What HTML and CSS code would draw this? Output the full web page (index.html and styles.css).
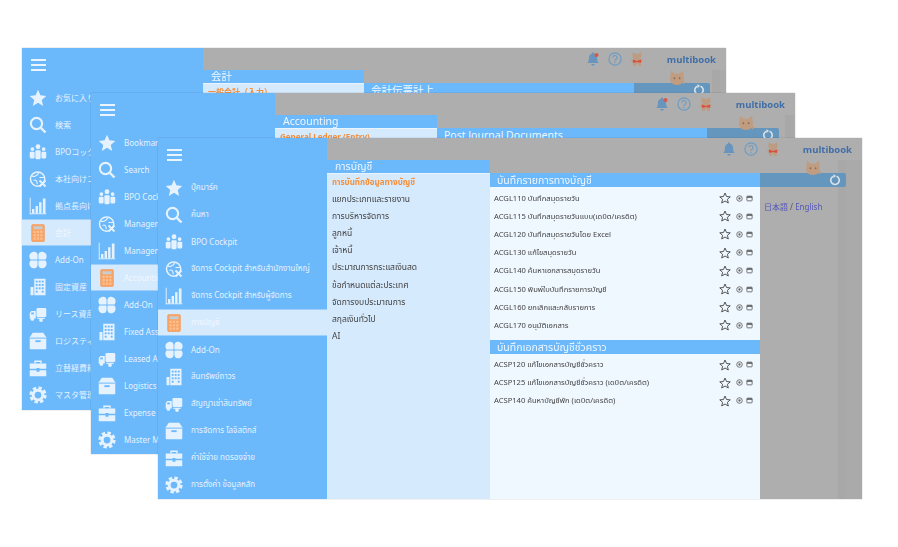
FILE: index.html
```html
<!DOCTYPE html>
<html>
<head>
	<meta charset="utf-8" />
	<title>multibook</title>
	<link rel="stylesheet" href="styles.css">
</head>
<body>
<svg class="defs" width="0" height="0">
	<symbol id="i-star" viewBox="0 0 24 24"><polygon points="12,1 15.2,8.4 23,9.2 17,14.5 18.9,22.5 12,18.2 5.1,22.5 7,14.5 1,9.2 8.800,8.400" fill="currentColor"/></symbol>
	<symbol id="i-search" viewBox="0 0 24 24"><circle cx="10" cy="10" r="7.500" fill="none" stroke="currentColor" stroke-width="2.800"/><line x1="15.500" y1="15.500" x2="22" y2="22" stroke="currentColor" stroke-width="3.200"/></symbol>
	<symbol id="i-people" viewBox="0 0 24 24"><g fill="currentColor"><circle cx="12" cy="5" r="3.200"/><circle cx="4.500" cy="8" r="2.500"/><circle cx="19.500" cy="8" r="2.500"/><rect x="8.500" y="9.500" width="7" height="12" rx="1.500"/><rect x="1" y="11.500" width="6.500" height="9" rx="1.500"/><rect x="16.500" y="11.500" width="6.500" height="9" rx="1.500"/></g></symbol>
	<symbol id="i-globe" viewBox="0 0 24 24"><g fill="none" stroke="currentColor"><circle cx="11.500" cy="12" r="9.500" stroke-width="2"/><path d="M4 8c4 2 7-1 9-4M6 14c3-2 5 1 5 5M14 10h6" stroke-width="1.500"/><path d="M14 14l8 8M22 14l-8 8" stroke-width="2.500"/></g></symbol>
	<symbol id="i-bars" viewBox="0 0 24 24"><g fill="currentColor"><rect x="1" y="1" width="1.200" height="22"/><rect x="1" y="21.800" width="22" height="1.200"/><rect x="4" y="16" width="3.200" height="6"/><rect x="8.800" y="12" width="3.200" height="10"/><rect x="13.500" y="7" width="3.200" height="15"/><rect x="18.500" y="2" width="3.500" height="20"/></g></symbol>
	<symbol id="i-calc" viewBox="0 0 24 24"><rect x="3.500" y="0.500" width="17" height="23" rx="2" fill="#f9a366" stroke="#f2a063"/><rect x="6" y="3" width="12" height="4" fill="#c9cdd0"/><g fill="#fbc190"><rect x="6" y="9" width="3" height="3"/><rect x="10.500" y="9" width="3" height="3"/><rect x="15" y="9" width="3" height="3"/><rect x="6" y="13.500" width="3" height="3"/><rect x="10.500" y="13.500" width="3" height="3"/><rect x="15" y="13.500" width="3" height="3"/><rect x="6" y="18" width="3" height="3"/><rect x="10.500" y="18" width="3" height="3"/><rect x="15" y="18" width="3" height="3"/></g></symbol>
	<symbol id="i-addon" viewBox="0 0 24 24"><g fill="currentColor"><path d="M11.300 11.300H2C0 9 0 5 2 3s6-3 8-1 1.500 5 1.300 9.300z"/><path d="M12.700 11.300H22c2-2.300 2-6.300 0-8.300s-6-3-8-1-1.500 5-1.300 9.300z"/><path d="M11.300 12.700H2c-2 2.300-2 6.300 0 8.300s6 3 8 1 1.500-5 1.300-9.300z"/><path d="M12.700 12.700H22c2 2.300 2 6.300 0 8.300s-6 3-8 1-1.500-5-1.300-9.300z"/></g></symbol>
	<symbol id="i-building" viewBox="0 0 24 24"><path fill="currentColor" d="M2 12h4v11H2zM7 1h15v22H7z"/><g fill="#6bb8fb"><rect x="9" y="3.500" width="2.500" height="2.500"/><rect x="13" y="3.500" width="2.500" height="2.500"/><rect x="17" y="3.500" width="2.500" height="2.500"/><rect x="9" y="8" width="2.500" height="2.500"/><rect x="13" y="8" width="2.500" height="2.500"/><rect x="17" y="8" width="2.500" height="2.500"/><rect x="9" y="12.500" width="2.500" height="2.500"/><rect x="13" y="12.500" width="2.500" height="2.500"/><rect x="17" y="12.500" width="2.500" height="2.500"/><rect x="9" y="17" width="2.500" height="2.500"/><rect x="17" y="17" width="2.500" height="2.500"/></g></symbol>
	<symbol id="i-truck" viewBox="0 0 24 24"><g fill="currentColor"><rect x="10" y="4" width="13" height="12" rx="1.500"/><path d="M1 10.500 3 8h6v10H1z"/><rect x="11" y="17" width="10" height="1.500"/><circle cx="4.500" cy="18.500" r="2.500"/><circle cx="16" cy="20" r="2.500"/></g><rect x="3" y="10" width="3.500" height="2.500" fill="#6bb8fb"/></symbol>
	<symbol id="i-box" viewBox="0 0 24 24"><path fill="currentColor" d="M5 1h14l4 6v15a1 1 0 0 1-1 1H2a1 1 0 0 1-1-1V7z"/><rect x="1" y="7.500" width="22" height="1.300" fill="#6bb8fb"/><rect x="8.500" y="11" width="7" height="2.500" fill="#6bb8fb"/></symbol>
	<symbol id="i-case" viewBox="0 0 24 24"><path fill="none" stroke="currentColor" stroke-width="1.800" d="M8 6V3h8v3"/><path fill="currentColor" d="M1 6h22v7H14v-1h-4v1H1zM1 15h9v2h4v-2h9v8H1z"/></symbol>
	<symbol id="i-gear" viewBox="0 0 24 24"><g fill="none" stroke="currentColor"><circle cx="12" cy="12" r="6.500" stroke-width="4"/><circle cx="12" cy="12" r="9.500" stroke-width="4" stroke-dasharray="4.500 3"/></g></symbol>
	<symbol id="i-fav" viewBox="0 0 24 24"><polygon points="12,2 15,9 22.500,9.700 16.800,14.600 18.600,22 12,18 5.400,22 7.200,14.600 1.500,9.700 9,9" fill="none" stroke="#555" stroke-width="2"/></symbol>
	<symbol id="i-dot" viewBox="0 0 24 24"><circle cx="12" cy="12" r="9.500" fill="none" stroke="#666" stroke-width="3"/><circle cx="12" cy="12" r="4" fill="#666"/></symbol>
	<symbol id="i-tab" viewBox="0 0 24 24"><rect x="3" y="4" width="18" height="16" rx="2" fill="none" stroke="#666" stroke-width="3"/><rect x="3" y="4" width="18" height="6" fill="#666"/></symbol>
	<symbol id="i-bell" viewBox="0 0 24 24"><path fill="#6795bd" d="M12 1c1.500 0 2 1 2 2 4 1 5 4 5 8 0 4 1 6 3 8H2c2-2 3-4 3-8 0-4 1-7 5-8 0-1 .500-2 2-2zM9 20.500h6a3 3 0 0 1-6 0z"/></symbol>
	<symbol id="i-bell-new" viewBox="0 0 24 24"><path fill="#6795bd" d="M12 1c1.500 0 2 1 2 2 4 1 5 4 5 8 0 4 1 6 3 8H2c2-2 3-4 3-8 0-4 1-7 5-8 0-1 .500-2 2-2zM9 20.500h6a3 3 0 0 1-6 0z"/><circle cx="18" cy="5" r="3.500" fill="#d9574a"/></symbol>
	<symbol id="i-help" viewBox="0 0 24 24"><circle cx="12" cy="12" r="10.500" fill="none" stroke="#6d9cc4" stroke-width="2"/><path d="M8.500 9.500a3.500 3.500 0 1 1 5 3.200c-1 .600-1.500 1.200-1.500 2.500" fill="none" stroke="#6d9cc4" stroke-width="2"/><circle cx="12" cy="18" r="1.200" fill="#6d9cc4"/></symbol>
	<symbol id="i-cat" viewBox="0 0 24 24"><path fill="#c09c80" d="M4 1l5 4h6l5-4 1 9c1 6-3 10-9 10S2 16 3 10z"/><path fill="#c09c80" d="M20 14l4 3-4 2z"/><circle cx="8.500" cy="11" r="1.200" fill="#8a6d5a"/><circle cx="15.500" cy="11" r="1.200" fill="#8a6d5a"/></symbol>
	<symbol id="i-mascot" viewBox="0 0 24 24"><path fill="#bd9c84" d="M5 0l4 3h6l4-3 1 7c0 3.500-3 6-8 6S4 10.500 4 7z"/><path fill="#bd9c84" d="M7 12h10l6 2-5 4 1 6h-5v-3h-4v3H5l1-6-5-4z"/><path fill="#d9503f" d="M5 13l7 2.500L19 13v6l-7-2-7 2z"/></symbol>
	<symbol id="i-reload" viewBox="0 0 24 24"><path d="M15 4.500a8.500 8.500 0 1 1-6 0" fill="none" stroke="#d9e3ea" stroke-width="3.200"/><path d="M9 0v8l5-4z" fill="#d9e3ea"/></symbol>
</svg>

<div class="stage">

	<!-- ja -->
	<div class="win win-ja">
		<nav class="side side-ja">
			<div class="burger"><i></i><i></i><i></i></div>
			<a class="nav"><svg><use href="#i-star"/></svg><span>お気に入り</span></a>
			<a class="nav"><svg><use href="#i-search"/></svg><span>検索</span></a>
			<a class="nav"><svg><use href="#i-people"/></svg><span>BPOコックピット</span></a>
			<a class="nav"><svg><use href="#i-globe"/></svg><span>本社向けコックピット</span></a>
			<a class="nav"><svg><use href="#i-bars"/></svg><span>拠点長向けコックピット</span></a>
			<a class="nav active"><svg><use href="#i-calc"/></svg><span>会計</span></a>
			<a class="nav"><svg><use href="#i-addon"/></svg><span>Add-On</span></a>
			<a class="nav"><svg><use href="#i-building"/></svg><span>固定資産</span></a>
			<a class="nav"><svg><use href="#i-truck"/></svg><span>リース資産</span></a>
			<a class="nav"><svg><use href="#i-box"/></svg><span>ロジスティクス</span></a>
			<a class="nav"><svg><use href="#i-case"/></svg><span>立替経費精算</span></a>
			<a class="nav"><svg><use href="#i-gear"/></svg><span>マスタ管理</span></a>
		</nav>
		<div class="main">
			<div class="topbar">
				<svg class="tool"><use href="#i-bell-new"/></svg>
				<svg class="tool"><use href="#i-help"/></svg>
				<svg class="tool mascot"><use href="#i-mascot"/></svg>
				<b class="logo">multibook</b>
			</div>
			<div class="panes">
				<div class="menu menu-ja">
					<h3>会計</h3>
					<ul><li class="on">一般会計（入力）</li></ul>
				</div>
				<div class="list">
					<h4 class="blue">会計伝票計上</h4>
				</div>
				<div class="aside">
					<svg class="cat"><use href="#i-cat"/></svg>
					<div class="strip"><svg><use href="#i-reload"/></svg></div>
				</div>
			</div>
		</div>
	</div>

	<!-- en -->
	<div class="win win-en">
		<nav class="side side-en">
			<div class="burger"><i></i><i></i><i></i></div>
			<a class="nav"><svg><use href="#i-star"/></svg><span>Bookmark</span></a>
			<a class="nav"><svg><use href="#i-search"/></svg><span>Search</span></a>
			<a class="nav"><svg><use href="#i-people"/></svg><span>BPO Cockpit</span></a>
			<a class="nav"><svg><use href="#i-globe"/></svg><span>Management Cockpit</span></a>
			<a class="nav"><svg><use href="#i-bars"/></svg><span>Management Cockpit</span></a>
			<a class="nav active"><svg><use href="#i-calc"/></svg><span>Accounting</span></a>
			<a class="nav"><svg><use href="#i-addon"/></svg><span>Add-On</span></a>
			<a class="nav"><svg><use href="#i-building"/></svg><span>Fixed Assets</span></a>
			<a class="nav"><svg><use href="#i-truck"/></svg><span>Leased Assets</span></a>
			<a class="nav"><svg><use href="#i-box"/></svg><span>Logistics</span></a>
			<a class="nav"><svg><use href="#i-case"/></svg><span>Expense</span></a>
			<a class="nav"><svg><use href="#i-gear"/></svg><span>Master Maintenance</span></a>
		</nav>
		<div class="main">
			<div class="topbar">
				<svg class="tool"><use href="#i-bell-new"/></svg>
				<svg class="tool"><use href="#i-help"/></svg>
				<svg class="tool mascot"><use href="#i-mascot"/></svg>
				<b class="logo">multibook</b>
			</div>
			<div class="panes">
				<div class="menu menu-en">
					<h3>Accounting</h3>
					<ul><li class="on">General Ledger (Entry)</li></ul>
				</div>
				<div class="list">
					<h4 class="blue">Post Journal Documents</h4>
				</div>
				<div class="aside">
					<svg class="cat"><use href="#i-cat"/></svg>
					<div class="strip"><svg><use href="#i-reload"/></svg></div>
				</div>
			</div>
		</div>
	</div>

	<!-- th -->
	<div class="win win-th">
		<nav class="side side-th">
			<div class="burger"><i></i><i></i><i></i></div>
			<a class="nav"><svg><use href="#i-star"/></svg><span>บุ๊คมาร์ค</span></a>
			<a class="nav"><svg><use href="#i-search"/></svg><span>ค้นหา</span></a>
			<a class="nav"><svg><use href="#i-people"/></svg><span>BPO Cockpit</span></a>
			<a class="nav"><svg><use href="#i-globe"/></svg><span>จัดการ Cockpit สำหรับสำนักงานใหญ่</span></a>
			<a class="nav"><svg><use href="#i-bars"/></svg><span>จัดการ Cockpit สำหรับผู้จัดการ</span></a>
			<a class="nav active"><svg><use href="#i-calc"/></svg><span>การบัญชี</span></a>
			<a class="nav"><svg><use href="#i-addon"/></svg><span>Add-On</span></a>
			<a class="nav"><svg><use href="#i-building"/></svg><span>สินทรัพย์ถาวร</span></a>
			<a class="nav"><svg><use href="#i-truck"/></svg><span>สัญญาเช่าสินทรัพย์</span></a>
			<a class="nav"><svg><use href="#i-box"/></svg><span>การจัดการ โลจิสติกส์</span></a>
			<a class="nav"><svg><use href="#i-case"/></svg><span>ค่าใช้จ่าย ทดรองจ่าย</span></a>
			<a class="nav"><svg><use href="#i-gear"/></svg><span>การตั้งค่า ข้อมูลหลัก</span></a>
		</nav>
		<div class="main">
			<div class="topbar">
				<svg class="tool"><use href="#i-bell"/></svg>
				<svg class="tool"><use href="#i-help"/></svg>
				<svg class="tool mascot"><use href="#i-mascot"/></svg>
				<b class="logo">multibook</b>
			</div>
			<div class="panes">
				<div class="menu menu-th">
					<h3>การบัญชี</h3>
					<ul>
						<li class="on">การบันทึกข้อมูลทางบัญชี</li>
						<li>แยกประเภทและรายงาน</li>
						<li>การบริหารจัดการ</li>
						<li>ลูกหนี้</li>
						<li>เจ้าหนี้</li>
						<li>ประมาณการกระแสเงินสด</li>
						<li>ข้อกำหนดแต่ละประเทศ</li>
						<li>จัดการงบประมาณการ</li>
						<li>สกุลเงินทั่วไป</li>
						<li>AI</li>
					</ul>
				</div>
				<div class="list">
					<h4 class="blue">บันทึกรายการทางบัญชี</h4>
					<div class="rows">
						<div class="row"><span>ACGL110 บันทึกสมุดรายวัน</span><svg class="fav"><use href="#i-fav"/></svg><svg class="mini"><use href="#i-dot"/></svg><svg class="mini"><use href="#i-tab"/></svg></div>
						<div class="row"><span>ACGL115 บันทึกสมุดรายวันแบบ(เดบิต/เครดิต)</span><svg class="fav"><use href="#i-fav"/></svg><svg class="mini"><use href="#i-dot"/></svg><svg class="mini"><use href="#i-tab"/></svg></div>
						<div class="row"><span>ACGL120 บันทึกสมุดรายวันโดย Excel</span><svg class="fav"><use href="#i-fav"/></svg><svg class="mini"><use href="#i-dot"/></svg><svg class="mini"><use href="#i-tab"/></svg></div>
						<div class="row"><span>ACGL130 แก้ไขสมุดรายวัน</span><svg class="fav"><use href="#i-fav"/></svg><svg class="mini"><use href="#i-dot"/></svg><svg class="mini"><use href="#i-tab"/></svg></div>
						<div class="row"><span>ACGL140 ค้นหาเอกสารสมุดรายวัน</span><svg class="fav"><use href="#i-fav"/></svg><svg class="mini"><use href="#i-dot"/></svg><svg class="mini"><use href="#i-tab"/></svg></div>
						<div class="row"><span>ACGL150 พิมพ์ใบบันทึกรายการบัญชี</span><svg class="fav"><use href="#i-fav"/></svg><svg class="mini"><use href="#i-dot"/></svg><svg class="mini"><use href="#i-tab"/></svg></div>
						<div class="row"><span>ACGL160 ยกเลิกและกลับรายการ</span><svg class="fav"><use href="#i-fav"/></svg><svg class="mini"><use href="#i-dot"/></svg><svg class="mini"><use href="#i-tab"/></svg></div>
						<div class="row"><span>ACGL170 อนุมัติเอกสาร</span><svg class="fav"><use href="#i-fav"/></svg><svg class="mini"><use href="#i-dot"/></svg><svg class="mini"><use href="#i-tab"/></svg></div>
					</div>
					<h4 class="blue second">บันทึกเอกสารบัญชีชั่วคราว</h4>
					<div class="rows">
						<div class="row"><span>ACSP120 แก้ไขเอกสารบัญชีชั่วคราว</span><svg class="fav"><use href="#i-fav"/></svg><svg class="mini"><use href="#i-dot"/></svg><svg class="mini"><use href="#i-tab"/></svg></div>
						<div class="row"><span>ACSP125 แก้ไขเอกสารบัญชีชั่วคราว (เดบิต/เครดิต)</span><svg class="fav"><use href="#i-fav"/></svg><svg class="mini"><use href="#i-dot"/></svg><svg class="mini"><use href="#i-tab"/></svg></div>
						<div class="row"><span>ACSP140 ค้นหาบัญชีพัก (เดบิต/เครดิต)</span><svg class="fav"><use href="#i-fav"/></svg><svg class="mini"><use href="#i-dot"/></svg><svg class="mini"><use href="#i-tab"/></svg></div>
					</div>
				</div>
				<div class="aside">
					<svg class="cat"><use href="#i-cat"/></svg>
					<div class="strip"><svg><use href="#i-reload"/></svg></div>
					<div class="lang"><a>日本語</a> / <a>English</a></div>
				</div>
			</div>
		</div>
	</div>

</div>
</body>
</html>
```

FILE: styles.css
```css
html, body {
	margin: 0;
	padding: 0;
	background: #fff;
}
.defs {
	position: absolute;
}
.stage {
	position: relative;
	width: 898px;
	height: 547px;
	overflow: hidden;
	filter: blur(.6px);
	font-family: "Noto Sans", "Noto Sans Thai", "Liberation Sans", "Noto Sans CJK JP", sans-serif;
}

/* windows */
.win {
	position: absolute;
	display: flex;
	width: 704px;
	height: 361px;
	background: #aeaeae;
	box-shadow: 0 0 1px rgba(60, 80, 100, .5);
}
.win-ja { left: 22px; top: 48px; height: 362px; }
.win-en { left: 91px; top: 93px; }
.win-th { left: 158px; top: 138px; }

/* sidebar */
.side {
	flex: none;
	background: #6bb8fb;
	color: #fff;
	overflow: hidden;
}
.side-ja { width: 181px; }
.side-en { width: 184px; }
.side-th { width: 169px; }
.burger {
	height: 36px;
	padding: 11px 0 0 9px;
	box-sizing: border-box;
}
.burger i {
	display: block;
	width: 15px;
	height: 2px;
	margin-bottom: 3px;
	background: #eaf5ff;
}
.nav {
	display: flex;
	align-items: center;
	height: 27px;
	padding-left: 7px;
	box-sizing: border-box;
	font-size: 8px;
	color: #e6f3ff;
	white-space: nowrap;
}
.nav svg {
	flex: none;
	width: 18px;
	height: 18px;
	margin-right: 8px;
}
.nav.active {
	background: #d6eafd;
	border-top: 1px solid #9fd0fb;
	border-bottom: 1px solid #9fd0fb;
	color: #f1f8ff;
}

/* main area */
.main {
	flex: 1;
	display: flex;
	flex-direction: column;
	min-width: 0;
}
.topbar {
	flex: none;
	display: flex;
	align-items: center;
	justify-content: flex-end;
	height: 22px;
	padding-right: 10px;
	background: #aeaeae;
	box-sizing: border-box;
}
.tool {
	width: 14px;
	height: 14px;
	margin-right: 8px;
}
.tool.mascot {
	height: 18px;
}
.logo {
	margin-left: 15px;
	font: bold 9.500px "Open Sans", sans-serif;
	color: #3f6ea8;
}
.panes {
	flex: 1;
	display: flex;
	min-height: 0;
}

/* second level menu */
.menu {
	flex: none;
	display: flex;
	flex-direction: column;
	background: #d6eafd;
}
.menu-ja { width: 161px; }
.menu-en { width: 162px; }
.menu-th { width: 163px; }
.menu h3 {
	flex: none;
	margin: 0;
	height: 13px;
	padding-left: 8px;
	background: #6bb8fb;
	font-size: 10.500px;
	font-weight: normal;
	line-height: 12px;
	color: #eef7ff;
}
.menu ul {
	margin: 0;
	padding: 0 0 0 5px;
	list-style: none;
	border-top: 1px solid #e8f4ff;
}
.menu li {
	height: 17.100px;
	font-size: 8.500px;
	line-height: 15px;
	color: #444;
	white-space: nowrap;
}
.menu li.on {
	font-size: 8px;
	font-weight: bold;
	color: #f58f3a;
}

/* item list */
.list {
	flex: none;
	width: 270px;
	padding-top: 13px;
	box-sizing: border-box;
	background: linear-gradient(#aeaeae 13px, #eff7ff 13px);
	overflow: hidden;
}
.blue {
	margin: 0;
	height: 14px;
	padding-left: 7px;
	background: #6bb8fb;
	font-size: 10.500px;
	font-weight: normal;
	line-height: 14px;
	color: #eef7ff;
	white-space: nowrap;
}
.blue.second {
	margin-top: 5px;
}
.rows {
	padding-top: 2px;
}
.row {
	display: flex;
	align-items: center;
	height: 18.200px;
	padding: 0 7px 0 4px;
	font-size: 7.600px;
	color: #444;
	white-space: nowrap;
}
.row span {
	flex: 1;
}
.fav {
	width: 12px;
	height: 12px;
	margin-right: 2px;
}
.mini {
	width: 7px;
	height: 7px;
	margin-left: 3px;
}

/* grey right column */
.aside {
	position: relative;
	flex: 1;
	padding: 13px 16px 0 0;
	background: linear-gradient(to right, #aeaeae 78px, #a8a8a8 78px, #a8a8a8 86px, #aaaaaa 86px);
}
.strip {
	display: flex;
	align-items: center;
	justify-content: flex-end;
	height: 14px;
	padding-right: 5px;
	background: #6596bd;
	border-radius: 0 2px 2px 0;
}
.strip svg {
	width: 12px;
	height: 12px;
}
.cat {
	position: absolute;
	z-index: 1;
	top: 0;
	right: 40px;
	width: 18px;
	height: 18px;
}
.lang {
	margin: 14px 0 0 4px;
	font-size: 8px;
	color: #555;
}
.lang a {
	color: #5557b8;
}
```
